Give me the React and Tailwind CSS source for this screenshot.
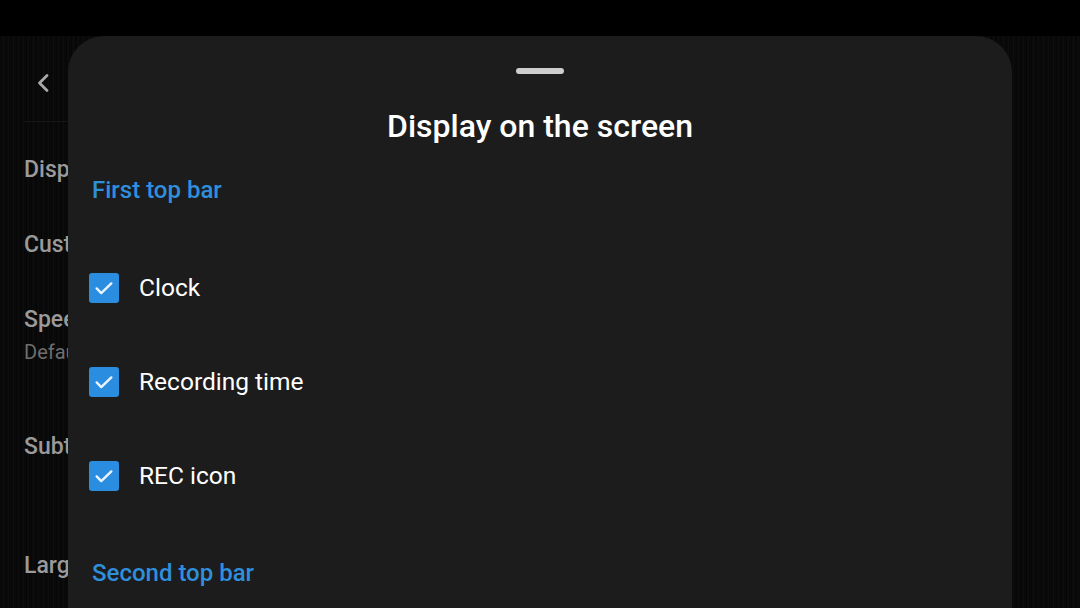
import React from "react";

const items = ["Clock", "Recording time", "REC icon"];

function CheckBox() {
  return (
    <div className="w-[30px] h-[30px] rounded-[3px] bg-[#2b8de0] flex items-center justify-center">
      <svg width="22" height="22" viewBox="0 0 24 24" fill="none">
        <path d="M4 12.5l5 5L20 7" stroke="#eaf4ff" strokeWidth="2.6" strokeLinecap="round" strokeLinejoin="round" />
      </svg>
    </div>
  );
}

export default function App() {
  return (
    <div
      className="w-[1080px] h-[608px] bg-black overflow-hidden pt-[36px]"
      style={{ fontFamily: "Roboto, 'Noto Sans', sans-serif" }}
    >
      <div className="relative h-full bg-[#070707] bg-[repeating-linear-gradient(90deg,#0b0b0b_0px,#050505_2px,#101010_3px,#060606_5px)]">
        {/* page behind the sheet, cut off by it */}
        <div className="w-[68px] overflow-hidden whitespace-nowrap pl-[24px] text-[#9a9a9a] font-medium text-[23px]">
          <div className="h-[86px] flex items-center pt-[8px] pl-[8px] border-b border-[#151515]">
            <svg width="24" height="24" viewBox="0 0 24 24" fill="none">
              <path d="M15 4.5l-7.5 7.5 7.5 7.5" stroke="#a8a8a8" strokeWidth="2.8" strokeLinecap="round" strokeLinejoin="round" />
            </svg>
          </div>
          <div className="pt-[34px] leading-[28px]">Display on the screen</div>
          <div className="pt-[47px] leading-[28px]">Custom</div>
          <div className="pt-[47px] leading-[28px]">Speed</div>
          <div className="pt-[6px] leading-[24px] text-[20px] font-normal text-[#6e6e6e]">Default</div>
          <div className="pt-[69px] leading-[28px]">Subtitles</div>
          <div className="pt-[91px] leading-[28px]">Large</div>
        </div>

        {/* bottom sheet */}
        <div className="absolute left-[68px] top-0 bottom-0 w-[944px] rounded-t-[36px] bg-[#1c1c1c] px-[21px]">
          <div className="flex justify-center pt-[32px]">
            <div className="w-[48px] h-[6px] rounded-full bg-[#cdcdcd]" />
          </div>
          <div className="mt-[34px] text-center text-white text-[32px] leading-[36px] font-medium">
            Display on the screen
          </div>
          <div className="mt-[32px] pl-[3px] text-[#2f8fdd] text-[24px] leading-[28px] font-medium">
            First top bar
          </div>
          <div className="mt-[37px]">
            {items.map((label) => (
              <div key={label} className="h-[94px] flex items-center">
                <CheckBox />
                <span className="ml-[20px] text-white text-[24.5px] leading-[28px]">{label}</span>
              </div>
            ))}
          </div>
          <div className="mt-[36px] pl-[3px] text-[#2f8fdd] text-[24px] leading-[28px] font-medium">
            Second top bar
          </div>
        </div>
      </div>
    </div>
  );
}
